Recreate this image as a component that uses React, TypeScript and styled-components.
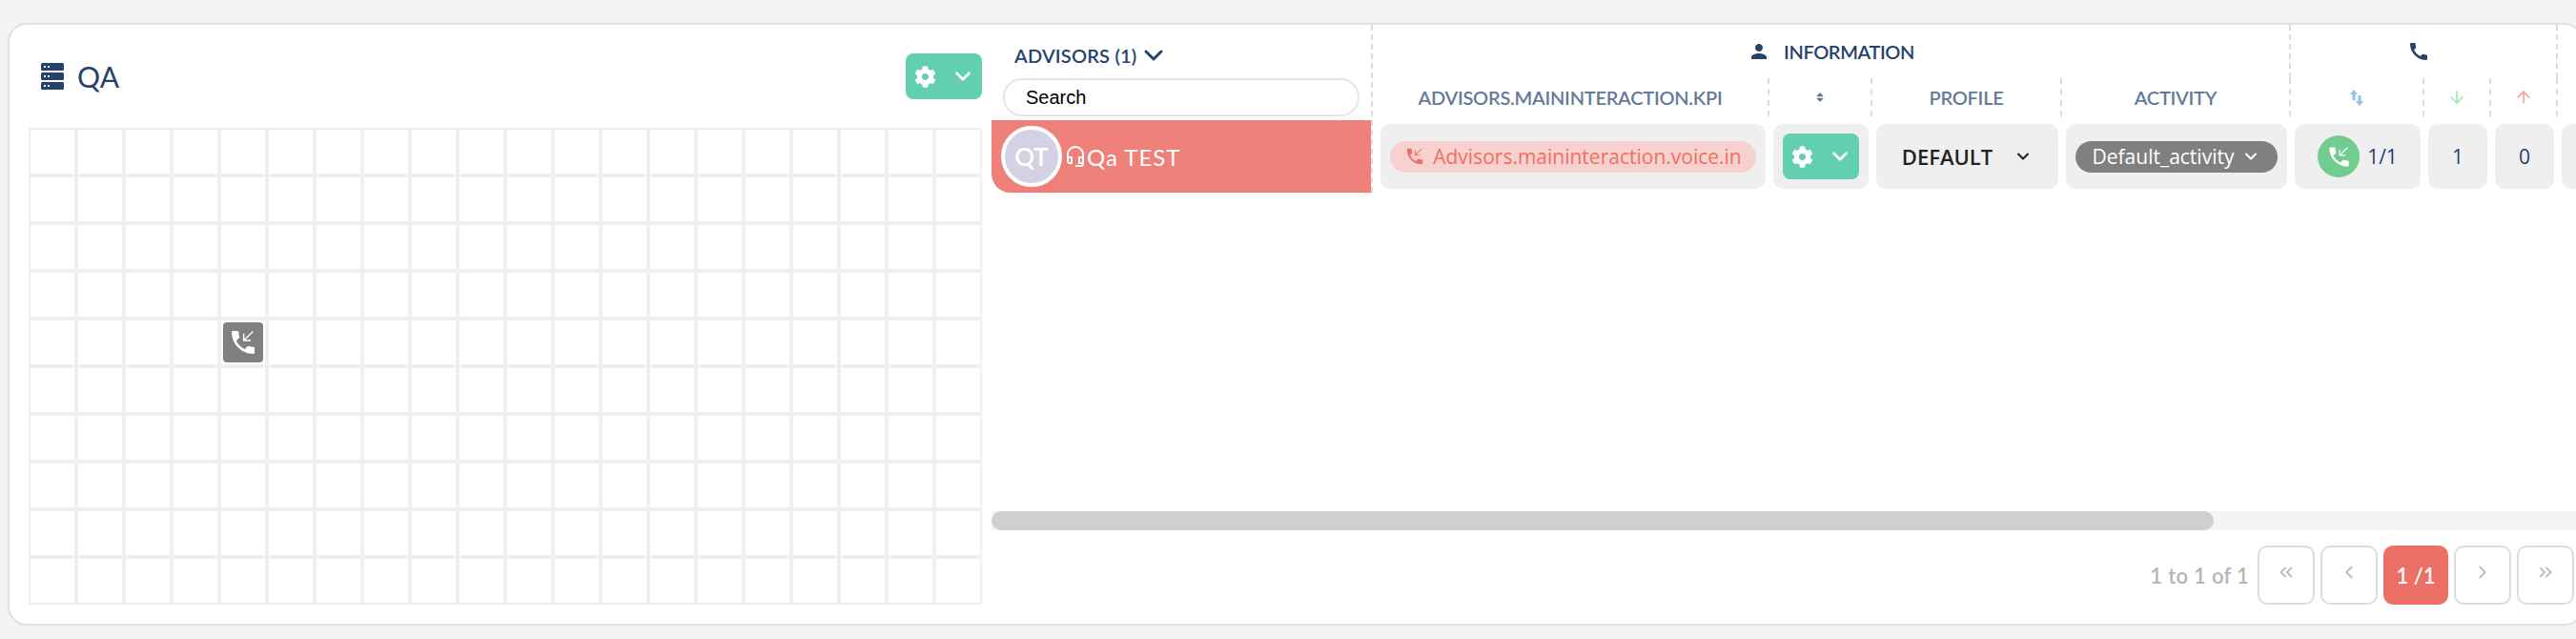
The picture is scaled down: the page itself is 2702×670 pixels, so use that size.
import styled, { createGlobalStyle } from 'styled-components'
import { LuChevronDown, LuChevronLeft, LuChevronRight, LuChevronsLeft, LuChevronsRight, LuArrowDown, LuArrowUp } from 'react-icons/lu'
import { MdCall, MdOutlineHeadsetMic, MdPerson, MdPhoneCallback } from 'react-icons/md'
import { FaCog, FaSort } from 'react-icons/fa'

const ROUNDED = '"Lato", "Open Sans", sans-serif'
const NAVY = '#24426b'

const GlobalStyle = createGlobalStyle`
  html, body {
    margin: 0;
    height: 100%;
    overflow: hidden;
    background: #f4f4f4;
  }
`

const Page = styled.div`
  padding: 24px 0 14px 8px;
`

const Card = styled.div`
  box-sizing: border-box;
  display: flex;
  width: 2702px;
  height: 632px;
  background: #fff;
  border: 2px solid #e0e0e0;
  border-radius: 20px;
`

const LeftPanel = styled.section`
  flex: none;
  width: 1000px;
  padding: 30px 10px 20px 20px;
`

const TitleRow = styled.div`
  display: flex;
  align-items: center;
  justify-content: space-between;
  height: 48px;
  margin-bottom: 30px;
`

const Title = styled.h1`
  display: flex;
  align-items: center;
  gap: 14px;
  margin: 0 0 0 13px;
  font: 400 30px ${ROUNDED};
  letter-spacing: 0.4px;
  color: ${NAVY};
`

const GearButton = styled.div`
  flex: none;
  display: flex;
  align-items: center;
  gap: 15px;
  box-sizing: border-box;
  width: 80px;
  height: 48px;
  padding-left: 9px;
  background: #62d0b0;
  border-radius: 8px;
  color: #fff;
`

const FloorGrid = styled.div`
  display: grid;
  grid-template-columns: repeat(20, 50px);
  grid-auto-rows: 50px;
`

const FloorCell = styled.div`
  box-sizing: border-box;
  display: flex;
  align-items: center;
  justify-content: center;
  border: 2px solid #f0f0f0;
`

const DeskTile = styled.div`
  display: flex;
  align-items: center;
  justify-content: center;
  flex: none;
  width: 42px;
  height: 42px;
  background: #808080;
  border-radius: 4px;
  color: #fff;
`

const RightPanel = styled.section`
  flex: 1;
  min-width: 0;
  display: flex;
  flex-direction: column;
  padding-bottom: 20px;
`

const Board = styled.div`
  display: flex;
`

const FrozenColumn = styled.div`
  flex: none;
  box-sizing: border-box;
  width: 400px;
  border-right: 2px dashed #ddd;
`

const FrozenHeader = styled.div`
  box-sizing: border-box;
  height: 100px;
  padding: 56px 0 0 12px;
  position: relative;
`

const AdvisorsLabel = styled.div`
  position: absolute;
  top: 16px;
  left: 24px;
  display: flex;
  align-items: center;
  gap: 2px;
  font: 600 20px ${ROUNDED};
  letter-spacing: 0.2px;
  color: ${NAVY};
`

const SearchBox = styled.input`
  display: block;
  box-sizing: border-box;
  width: 374px;
  height: 40px;
  padding: 0 22px;
  background: #fff;
  border: 2px solid #e6e6e6;
  border-radius: 20px;
  outline: none;
  font: 20px "Liberation Sans", Arial, sans-serif;
  &::placeholder {
    color: #000;
    opacity: 1;
  }
`

const AdvisorRow = styled.div`
  display: flex;
  align-items: center;
  height: 76px;
  padding-left: 10px;
  background: #ef8079;
  border-bottom-left-radius: 20px;
  color: #fff;
`

const Avatar = styled.div`
  flex: none;
  box-sizing: border-box;
  display: flex;
  align-items: center;
  justify-content: center;
  width: 64px;
  height: 64px;
  margin-right: 2px;
  background: #d5d1e4;
  border: 4px solid #fff;
  border-radius: 50%;
  font: 600 26px ${ROUNDED};
`

const AdvisorName = styled.span`
  font: 400 24px ${ROUNDED};
  letter-spacing: 1px;
`

const ScrollArea = styled.div`
  flex: 1;
  min-width: 0;
  overflow: hidden;
  display: grid;
  grid-template-columns: 416px 108px 199px 240px 140px 70px 70px 100px;
  grid-template-rows: 56px 40px 76px;
`

const GroupHead = styled.div<{ $span: number; $open?: boolean }>`
  grid-column: span ${(p) => p.$span};
  box-sizing: border-box;
  display: flex;
  align-items: center;
  justify-content: center;
  gap: 14px;
  border-right: ${(p) => (p.$open ? 'none' : '2px dashed #ddd')};
  font: 600 20px ${ROUNDED};
  letter-spacing: -0.4px;
  color: ${NAVY};
`

const ColumnHead = styled.div<{ $open?: boolean }>`
  box-sizing: border-box;
  display: flex;
  align-items: center;
  justify-content: center;
  border-right: ${(p) => (p.$open ? 'none' : '2px dashed #ddd')};
  font: 600 20px ${ROUNDED};
  letter-spacing: -0.25px;
  color: #667a98;
`

const DataCell = styled.div<{ $first?: boolean }>`
  box-sizing: border-box;
  display: flex;
  align-items: center;
  justify-content: center;
  gap: 8px;
  margin: 8px 4px 0 ${(p) => (p.$first ? '8px' : '4px')};
  height: 68px;
  padding: 0 10px;
  background: #efefef;
  border-radius: 10px;
  font: 400 21px "Open Sans", sans-serif;
  color: ${NAVY};
`

const Pill = styled.div<{ $tone: 'alert' | 'idle' }>`
  flex: 1;
  display: flex;
  align-items: center;
  justify-content: center;
  gap: 8px;
  height: 33px;
  border-radius: 17px;
  background: ${(p) => (p.$tone === 'alert' ? '#f6d1cd' : '#808080')};
  color: ${(p) => (p.$tone === 'alert' ? '#ef6f66' : '#fff')};
  font: 400 21px "Open Sans", sans-serif;
  white-space: nowrap;
`

const ProfileName = styled.span`
  margin-right: 14px;
  font-size: 22px;
  font-weight: 600;
  color: #222;
`

const CallBadge = styled.div`
  display: flex;
  align-items: center;
  justify-content: center;
  width: 44px;
  height: 44px;
  background: #72cc8f;
  border-radius: 50%;
  color: #fff;
`

const ScrollTrack = styled.div`
  margin-top: auto;
  height: 20px;
  background: #f4f4f4;
`

const ScrollThumb = styled.div`
  width: 1282px;
  height: 20px;
  background: #cfcfcf;
  border-radius: 10px;
`

const Pager = styled.div`
  display: flex;
  align-items: center;
  justify-content: flex-end;
  gap: 6px;
  margin-top: 16px;
  padding-right: 8px;
`

const PagerText = styled.span`
  margin-right: 3px;
  font: 600 22px ${ROUNDED};
  letter-spacing: 0.3px;
  color: #b5b5b5;
`

const PagerButton = styled.div`
  box-sizing: border-box;
  display: flex;
  align-items: center;
  justify-content: center;
  width: 60px;
  height: 62px;
  padding-bottom: 6px;
  border: 2px solid #ddd;
  border-radius: 10px;
  color: #bbb;
`

const PagerCurrent = styled.div`
  display: flex;
  align-items: center;
  justify-content: center;
  width: 68px;
  height: 62px;
  background: #ed7066;
  border-radius: 10px;
  font: 600 22px ${ROUNDED};
  color: #fff;
`

function ServerIcon() {
  return (
    <svg width='24' height='28' viewBox='0 0 24 28' fill={NAVY}>
      {[0, 10, 20].map((y) => (
        <g key={y}>
          <rect y={y} width='24' height='8' rx='1.5' />
          <rect x='3' y={y + 3} width='2' height='2' fill='#fff' />
          <rect x='7' y={y + 3} width='2' height='2' fill='#fff' />
        </g>
      ))}
    </svg>
  )
}

function SwapIcon() {
  return (
    <svg width='14' height='17' viewBox='0 0 14 17' fill='#8cc3e8'>
      <path d='M4 0 L8 5 H5.5 V11 H2.5 V5 H0 Z' />
      <path d='M10 17 L14 12 H11.5 V6 H8.5 V12 H6 Z' />
    </svg>
  )
}

function App() {
  return (
    <Page>
      <GlobalStyle />
      <Card>
        <LeftPanel>
          <TitleRow>
            <Title>
              <ServerIcon />
              QA
            </Title>
            <GearButton>
              <FaCog size={23} />
              <LuChevronDown size={26} strokeWidth={2.5} />
            </GearButton>
          </TitleRow>
          <FloorGrid>
            {Array.from({ length: 200 }, (_, i) => (
              <FloorCell key={i}>
                {i === 84 && (
                  <DeskTile>
                    <MdPhoneCallback size={32} />
                  </DeskTile>
                )}
              </FloorCell>
            ))}
          </FloorGrid>
        </LeftPanel>
        <RightPanel>
          <Board>
            <FrozenColumn>
              <FrozenHeader>
                <AdvisorsLabel>
                  ADVISORS (1)
                  <LuChevronDown size={32} strokeWidth={2.25} />
                </AdvisorsLabel>
                <SearchBox placeholder='Search' />
              </FrozenHeader>
              <AdvisorRow>
                <Avatar>QT</Avatar>
                <MdOutlineHeadsetMic size={24} />
                <AdvisorName>Qa TEST</AdvisorName>
              </AdvisorRow>
            </FrozenColumn>
            <ScrollArea>
              <GroupHead $span={4}>
                <MdPerson size={24} />
                INFORMATION
              </GroupHead>
              <GroupHead $span={3}>
                <MdCall size={24} style={{ marginRight: 10 }} />
              </GroupHead>
              <GroupHead $span={1} $open />
              <ColumnHead>ADVISORS.MAININTERACTION.KPI</ColumnHead>
              <ColumnHead>
                <FaSort size={12} />
              </ColumnHead>
              <ColumnHead>PROFILE</ColumnHead>
              <ColumnHead>ACTIVITY</ColumnHead>
              <ColumnHead>
                <SwapIcon />
              </ColumnHead>
              <ColumnHead>
                <LuArrowDown size={20} color='#a5e3ba' />
              </ColumnHead>
              <ColumnHead>
                <LuArrowUp size={20} color='#f5a29b' />
              </ColumnHead>
              <ColumnHead $open />
              <DataCell $first>
                <Pill $tone='alert'>
                  <MdPhoneCallback size={22} />
                  Advisors.maininteraction.voice.in
                </Pill>
              </DataCell>
              <DataCell>
                <GearButton>
                  <FaCog size={23} />
                  <LuChevronDown size={26} strokeWidth={2.5} />
                </GearButton>
              </DataCell>
              <DataCell>
                <ProfileName>DEFAULT</ProfileName>
                <LuChevronDown size={20} strokeWidth={2.5} color='#222' />
              </DataCell>
              <DataCell>
                <Pill $tone='idle'>
                  Default_activity
                  <LuChevronDown size={20} strokeWidth={2.5} />
                </Pill>
              </DataCell>
              <DataCell>
                <CallBadge>
                  <MdPhoneCallback size={27} />
                </CallBadge>
                1/1
              </DataCell>
              <DataCell>1</DataCell>
              <DataCell>0</DataCell>
              <DataCell />
            </ScrollArea>
          </Board>
          <ScrollTrack>
            <ScrollThumb />
          </ScrollTrack>
          <Pager>
            <PagerText>1 to 1 of 1</PagerText>
            <PagerButton>
              <LuChevronsLeft size={22} />
            </PagerButton>
            <PagerButton>
              <LuChevronLeft size={22} />
            </PagerButton>
            <PagerCurrent>1 /1</PagerCurrent>
            <PagerButton>
              <LuChevronRight size={22} />
            </PagerButton>
            <PagerButton>
              <LuChevronsRight size={22} />
            </PagerButton>
          </Pager>
        </RightPanel>
      </Card>
    </Page>
  )
}

export default App
